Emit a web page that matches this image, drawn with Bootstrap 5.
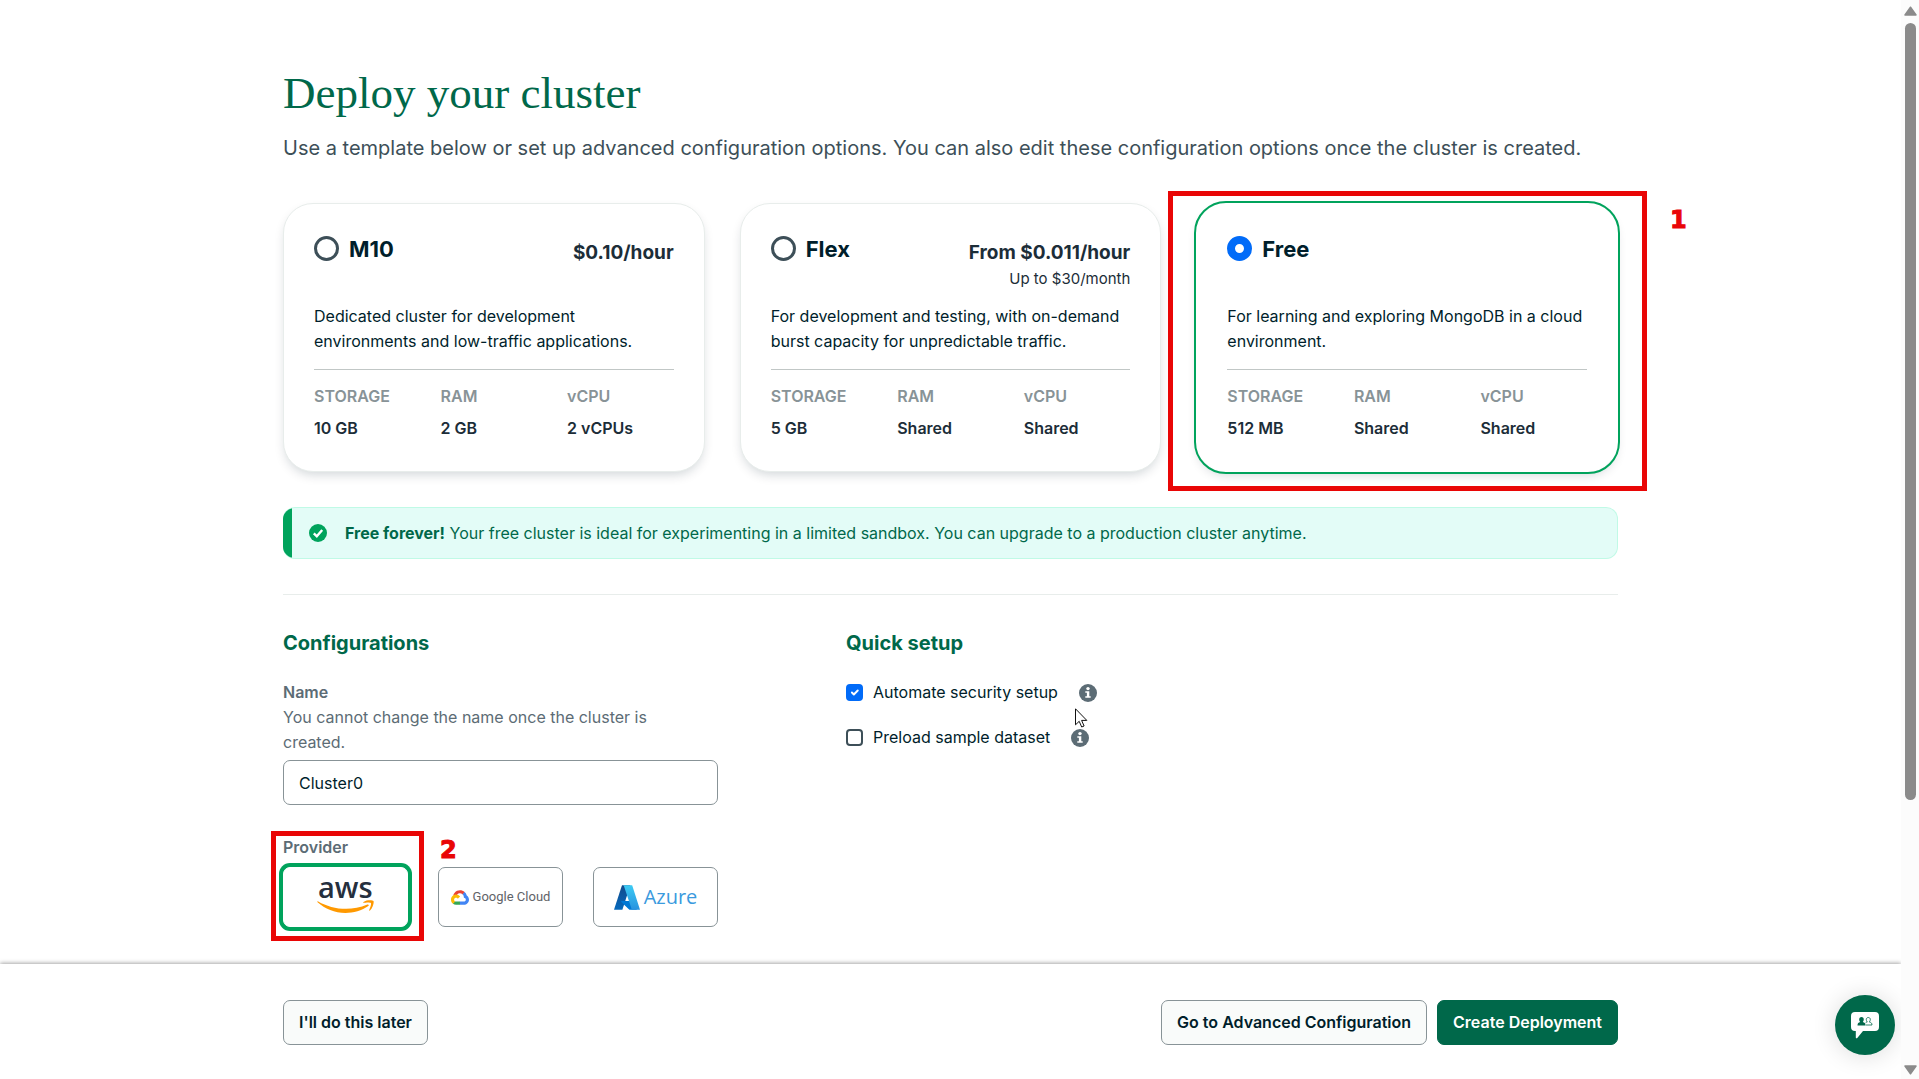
<!DOCTYPE html>
<html lang="en">
<head>
<meta charset="utf-8">
<meta name="viewport" content="width=device-width, initial-scale=1">
<title>Deploy your cluster</title>
<link rel="stylesheet" href="https://cdn.jsdelivr.net/npm/bootstrap@5.3.0/dist/css/bootstrap.min.css">
<style>
  :root { --ink: #001e2b; --forest: #00684a; --leaf: #00a35c; --slate: #3d4f58; --steel: #5c6c75; --line: #889397; --flag: #e90606; }
  body { font-family: Inter, "Liberation Sans", sans-serif; font-size: 16px; line-height: 25px; color: var(--ink); background: #fff; }
  .shell { height: 100vh; }
  .viewport-area { min-height: 0; }
  .wrap { width: 100%; max-width: 1335px; }
  .wrap-top { padding-top: 68px; }
  h1 { font-family: "Liberation Serif", serif; font-size: 45px; line-height: 50px; color: var(--forest); font-weight: 400; margin-bottom: 13px; }
  .intro { font-size: 20px; line-height: 35px; color: var(--slate); margin-bottom: 37px; }
  h2 { font-size: 20px; line-height: 30px; font-weight: 700; color: var(--forest); margin-bottom: 22px; }

  .tiers { display: grid; grid-template-columns: repeat(3, 1fr); gap: 35px; }
  .tier { position: relative; padding: 30px; border: 1px solid #e8edeb; border-radius: 30px; box-shadow: 0 5px 12px -3px rgba(0, 30, 43, .2); background: #fff; }
  .tier.chosen { outline: 2px solid var(--leaf); outline-offset: 0; border-color: #fff; }
  .tier-head { height: 70px; }
  .tier-name { display: flex; align-items: flex-start; gap: 10px; }
  .tier-head label { font-size: 22px; line-height: 30px; font-weight: 700; }
  .tier-head .form-check-input { width: 25px; height: 25px; margin: 2px 0 0; border: 3px solid var(--slate); }
  .tier-head .form-check-input:checked { border: 8px solid #016bf8; background: #fff; }
  .price-block { margin-top: 5px; text-align: right; }
  .price { font-size: 19px; line-height: 28px; font-weight: 700; color: #1c2d38; }
  .price-note { font-size: 15px; line-height: 24px; color: #1c2d38; }
  .tier-rule { height: 1px; background: #c1c7c6; margin: 15px 0 14px; }
  .specs { display: grid; grid-template-columns: repeat(3, 1fr); column-gap: 20px; row-gap: 7px; grid-auto-flow: column; grid-template-rows: auto auto; font-size: 16px; font-weight: 600; }
  .specs dt { color: var(--line); font-weight: 600; }
  .specs dd { margin: 0; color: #1c2d38; }

  .flag-box { position: absolute; border: 5px solid var(--flag); pointer-events: none; }
  .flag-num { position: absolute; font: 700 24px/28px "DejaVu Sans", sans-serif; color: var(--flag); -webkit-text-stroke: 1px var(--flag); }
  .flag-tier { inset: -13px -30px -20px -29px; }
  .flag-tier .flag-num { left: calc(100% + 28px); top: 10px; }
  .flag-provider { inset: -4px auto -14px -12px; width: 153px; }
  .flag-provider .flag-num { left: calc(100% + 21px); top: 0; }

  .notice { margin-top: 35px; height: 52px; padding-left: 26px; gap: 18px; border: 1px solid #c0fae6; border-left: 0; border-radius: 12px; background: #e3fcf7; color: var(--forest); overflow: hidden; position: relative; }
  .notice::before { content: ""; position: absolute; left: 0; top: 0; bottom: 0; width: 9px; background: var(--leaf); }
  .rule { height: 1px; background: #e8edeb; margin: 35px 0 33px; }

  .setup { column-gap: 128px; }
  .config { width: 435px; }
  .field-title { font-weight: 600; color: var(--steel); display: block; }
  .field-help { color: var(--steel); max-width: 400px; margin: 0; }
  .config .form-control { height: 45px; padding: 0 15px; margin: 5px 0 30px; border: 1px solid var(--line); border-radius: 7px; font-size: 16px; color: var(--ink); }
  .providers { display: grid; grid-template-columns: repeat(3, 1fr); gap: 30px; margin-top: 7px; }
  .provider { height: 60px; padding: 0; border: 1px solid var(--line); border-radius: 7px; background: #fff; }
  .provider.chosen { border-color: #fff; box-shadow: 0 0 0 4px var(--leaf); }
  .gcloud { font: 400 13px/20px Roboto, sans-serif; color: #5f6368; }
  .azure { font: 400 20px/24px "Open Sans", sans-serif; color: #3a9ade; }
  .checks { display: flex; flex-direction: column; gap: 20px; }
  .checks .form-check-input { width: 17px; height: 17px; margin: 0; border: 2px solid var(--slate); border-radius: 4px; }
  .checks .form-check-input:checked { background-color: #016bf8; border-color: #016bf8; }
  .checks label { margin-left: 10px; }
  .tip { margin-left: 21px; }
  .pointer { position: absolute; left: 229px; top: 28px; }

  .actions { height: 115px; padding-top: 2px; background: #fff; box-shadow: 0 -1px 4px rgba(0, 0, 0, .35); clip-path: inset(-8px 0 0 0); position: relative; }
  .action-row { gap: 10px; }
  .act { height: 45px; padding: 0 15px; border: 1px solid var(--line); border-radius: 7px; background: #f9fbfa; color: var(--ink); font-size: 16px; font-weight: 600; }
  .act.go { background: var(--forest); border-color: var(--forest); color: #fff; }
  .chat { position: absolute; right: 6px; bottom: 24px; width: 60px; height: 60px; border: 0; border-radius: 50%; background: var(--forest); box-shadow: 0 1px 24px rgba(0, 0, 0, .14); }
  .rail { width: 18px; background: #fcfcfc; padding: 6px 0 4px; }
  .rail-track { padding-top: 7px; }
  .rail-thumb { width: 11px; height: 74.6%; border-radius: 6px; background: #8b8b8b; }
</style>
</head>
<body>
<svg class="d-none" aria-hidden="true">
  <symbol id="info" viewBox="0 0 18 18"><circle cx="9" cy="9" r="9" fill="#5c6c75"/><circle cx="9" cy="4.600" r="1.700" fill="#fff"/><path d="M6.300 7.200h4v5h1.400v1.600H6.300v-1.600h1.600V8.800H6.300z" fill="#fff"/></symbol>
</svg>
<div class="shell d-flex overflow-hidden">
  <div class="d-flex flex-column flex-grow-1">
    <main class="viewport-area flex-grow-1 overflow-hidden">
      <div class="wrap wrap-top mx-auto">
        <h1>Deploy your cluster</h1>
        <p class="intro">Use a template below or set up advanced configuration options. You can also edit these configuration options once the cluster is created.</p>

        <div class="tiers">
          <section class="tier">
            <div class="tier-head d-flex justify-content-between align-items-start">
              <div class="tier-name"><input class="form-check-input" type="radio" name="tier" id="m10"><label for="m10">M10</label></div>
              <div class="price-block"><div class="price">$0.10/hour</div></div>
            </div>
            <div>Dedicated cluster for development<br>environments and low-traffic applications.</div>
            <div class="tier-rule"></div>
            <dl class="specs mb-0"><dt>STORAGE</dt><dd>10 GB</dd><dt>RAM</dt><dd>2 GB</dd><dt>vCPU</dt><dd>2 vCPUs</dd></dl>
          </section>
          <section class="tier">
            <div class="tier-head d-flex justify-content-between align-items-start">
              <div class="tier-name"><input class="form-check-input" type="radio" name="tier" id="flex"><label for="flex">Flex</label></div>
              <div class="price-block"><div class="price">From $0.011/hour</div><div class="price-note">Up to $30/month</div></div>
            </div>
            <div>For development and testing, with on-demand<br>burst capacity for unpredictable traffic.</div>
            <div class="tier-rule"></div>
            <dl class="specs mb-0"><dt>STORAGE</dt><dd>5 GB</dd><dt>RAM</dt><dd>Shared</dd><dt>vCPU</dt><dd>Shared</dd></dl>
          </section>
          <section class="tier chosen">
            <div class="tier-head d-flex justify-content-between align-items-start">
              <div class="tier-name"><input class="form-check-input" type="radio" name="tier" id="free" checked><label for="free">Free</label></div>
            </div>
            <div>For learning and exploring MongoDB in a cloud<br>environment.</div>
            <div class="tier-rule"></div>
            <dl class="specs mb-0"><dt>STORAGE</dt><dd>512 MB</dd><dt>RAM</dt><dd>Shared</dd><dt>vCPU</dt><dd>Shared</dd></dl>
            <div class="flag-box flag-tier"><span class="flag-num">1</span></div>
          </section>
        </div>

        <div class="notice d-flex align-items-center">
          <svg width="18" height="18" viewBox="0 0 18 18" aria-hidden="true"><circle cx="9" cy="9" r="9" fill="#00a35c"/><path d="M4.800 9.300l3 3 5.400-6.400" fill="none" stroke="#fff" stroke-width="2.400"/></svg>
          <div><strong>Free forever!</strong> Your free cluster is ideal for experimenting in a limited sandbox. You can upgrade to a production cluster anytime.</div>
        </div>
        <div class="rule"></div>

        <div class="setup d-flex">
          <section class="config">
            <h2>Configurations</h2>
            <label class="field-title" for="cname">Name</label>
            <p class="field-help">You cannot change the name once the cluster is created.</p>
            <input class="form-control" id="cname" type="text" value="Cluster0">
            <div class="position-relative">
              <span class="field-title">Provider</span>
              <div class="providers">
                <button type="button" class="provider chosen d-flex align-items-center justify-content-center" aria-label="AWS">
                  <svg width="57" height="40" viewBox="0 0 57 40"><text x="1" y="21" font-family="Open Sans" font-weight="600" font-size="29" fill="#252f3e">aws</text><g transform="translate(0 2) scale(.1875)" fill="#f90"><path d="M273.500 143.700c-32.900 24.300-80.700 37.200-121.800 37.200-57.600 0-109.500-21.300-148.700-56.700-3.100-2.800-.3-6.600 3.400-4.400 42.400 24.600 94.700 39.500 148.800 39.500 36.500 0 76.600-7.600 113.500-23.200 5.500-2.500 10.200 3.600 4.800 7.600z"/><path d="M287.200 128.100c-4.200-5.400-27.800-2.600-38.500-1.300-3.200.4-3.700-2.400-.8-4.500 18.800-13.200 49.700-9.400 53.300-5 3.600 4.500-1 35.400-18.600 50.200-2.700 2.300-5.300 1.100-4.100-1.900 4-9.900 12.900-32.200 8.700-37.500z"/></g></svg>
                </button>
                <button type="button" class="provider d-flex align-items-center justify-content-center gap-1">
                  <svg width="18" height="15" viewBox="0 0 256 206" aria-hidden="true"><path fill="#ea4335" d="M170.250 56.820l22.250-22.250 1.490-9.370C153.440-11.680 88.980-7.500 52.420 33.920 42.270 45.420 34.730 59.760 30.720 74.570l7.970-1.120 44.500-7.340 3.440-3.510c19.800-21.750 53.270-24.670 76.130-6.170z"/><path fill="#4285f4" d="M224.200 73.920C219.090 55.080 208.590 38.150 193.990 25.200l-31.230 31.230c13.180 10.770 20.700 27.010 20.370 44.030v5.550c15.360 0 27.800 12.440 27.800 27.790 0 15.360-12.440 27.490-27.800 27.490h-55.670l-5.460 5.930v33.340l5.460 5.240h55.670c39.930.3 72.560-31.500 72.870-71.430.19-24.200-11.750-46.890-31.800-60.450"/><path fill="#34a853" d="M71.870 205.800h55.590v-44.510H71.870c-3.960 0-7.800-.85-11.400-2.500l-7.890 2.420-22.400 22.250-1.960 7.580c12.570 9.490 27.900 14.820 43.650 14.760"/><path fill="#fbbc05" d="M71.870 61.430C31.940 61.660-.24 94.230 0 134.160c.13 22.300 10.550 43.290 28.220 56.880l32.250-32.250c-13.990-6.320-20.210-22.780-13.890-36.770 6.320-13.990 22.790-20.210 36.780-13.890 6.160 2.780 11.100 7.720 13.890 13.890l32.240-32.250c-13.720-17.940-35.040-28.430-57.620-28.340"/></svg>
                  <span class="gcloud">Google Cloud</span>
                </button>
                <button type="button" class="provider d-flex align-items-center justify-content-center gap-1">
                  <svg width="26" height="25" viewBox="4 6 88 84" aria-hidden="true"><defs><linearGradient id="az1" x1="0" y1="0" x2="0" y2="1"><stop stop-color="#114a8b"/><stop offset="1" stop-color="#0669bc"/></linearGradient><linearGradient id="az2" x1="0" y1="0" x2="0" y2="1"><stop stop-color="#3ccbf4"/><stop offset="1" stop-color="#2892df"/></linearGradient></defs><path fill="url(#az1)" d="M31 6.540h28.380L32.350 89.460H4z"/><path fill="#0078d4" d="M71.180 60.260H29.890a1.910 1.910 0 0 0-1.310 3.310l26.530 24.760a4.170 4.170 0 0 0 2.850 1.130h23.380z"/><path fill="url(#az2)" d="M65.500 6.540H33.650a4.150 4.150 0 0 1 3.930 2.820l25.180 74.620a4.150 4.150 0 0 1-3.930 5.480H92z"/></svg>
                  <span class="azure">Azure</span>
                </button>
              </div>
              <div class="flag-box flag-provider"><span class="flag-num">2</span></div>
            </div>
          </section>

          <section>
            <h2>Quick setup</h2>
            <div class="checks position-relative">
              <div class="d-flex align-items-center"><input class="form-check-input" type="checkbox" id="auto" checked><label for="auto">Automate security setup</label><svg class="tip" width="18" height="18" role="img" aria-label="Info"><use href="#info"/></svg></div>
              <div class="d-flex align-items-center"><input class="form-check-input" type="checkbox" id="sample"><label for="sample">Preload sample dataset</label><svg class="tip" width="18" height="18" role="img" aria-label="Info"><use href="#info"/></svg></div>
              <svg class="pointer" width="13" height="20" viewBox="0 0 13 20" aria-hidden="true"><path d="M.5.800v16l3.700-3.500 2.500 5.700 2.400-1-2.500-5.600h5.200z" fill="#fff" stroke="#111"/></svg>
            </div>
          </section>
        </div>
      </div>
    </main>

    <footer class="actions d-flex align-items-center">
      <div class="wrap action-row mx-auto d-flex">
        <button type="button" class="act me-auto">I'll do this later</button>
        <button type="button" class="act">Go to Advanced Configuration</button>
        <button type="button" class="act go">Create Deployment</button>
      </div>
      <button type="button" class="chat d-flex align-items-center justify-content-center p-0" aria-label="Chat">
        <svg width="28" height="27" viewBox="0 0 28 27"><path d="M4 0h20a4 4 0 0 1 4 4v11a4 4 0 0 1-4 4H12l-5.500 6.800c-1 1-1.700.5-1.700-.6V19H4a4 4 0 0 1-4-4V4a4 4 0 0 1 4-4z" fill="#fff"/><path d="M6.500 13.500c0-2.500 1-3 2.700-3.500C7.500 8 8 5 10.500 5s3 3 1.300 5c1.700.5 2.700 1 2.700 3.500z" fill="#00684a"/><path d="M14.800 13H21c0-2-1-2.500-2.700-3 1.700-2 1.200-4.500-1-4.500s-2.700 2.500-1 4.500c-.8.200-1.300.4-1.700.8" fill="none" stroke="#00684a" stroke-width=".8"/></svg>
      </button>
    </footer>
  </div>

  <div class="rail d-flex flex-column align-items-center flex-shrink-0" aria-hidden="true">
    <svg width="13" height="10" viewBox="0 0 13 10"><path d="M6.500 1.200L12 9H1z" fill="#8b8b8b" stroke="#8b8b8b" stroke-width="1.500" stroke-linejoin="round"/></svg>
    <div class="rail-track flex-grow-1"><div class="rail-thumb"></div></div>
    <svg width="13" height="10" viewBox="0 0 13 10"><path d="M6.500 8.800L12 1H1z" fill="#8b8b8b" stroke="#8b8b8b" stroke-width="1.500" stroke-linejoin="round"/></svg>
  </div>
</div>
<script src="https://cdn.jsdelivr.net/npm/bootstrap@5.3.0/dist/js/bootstrap.bundle.min.js"></script>
</body>
</html>
